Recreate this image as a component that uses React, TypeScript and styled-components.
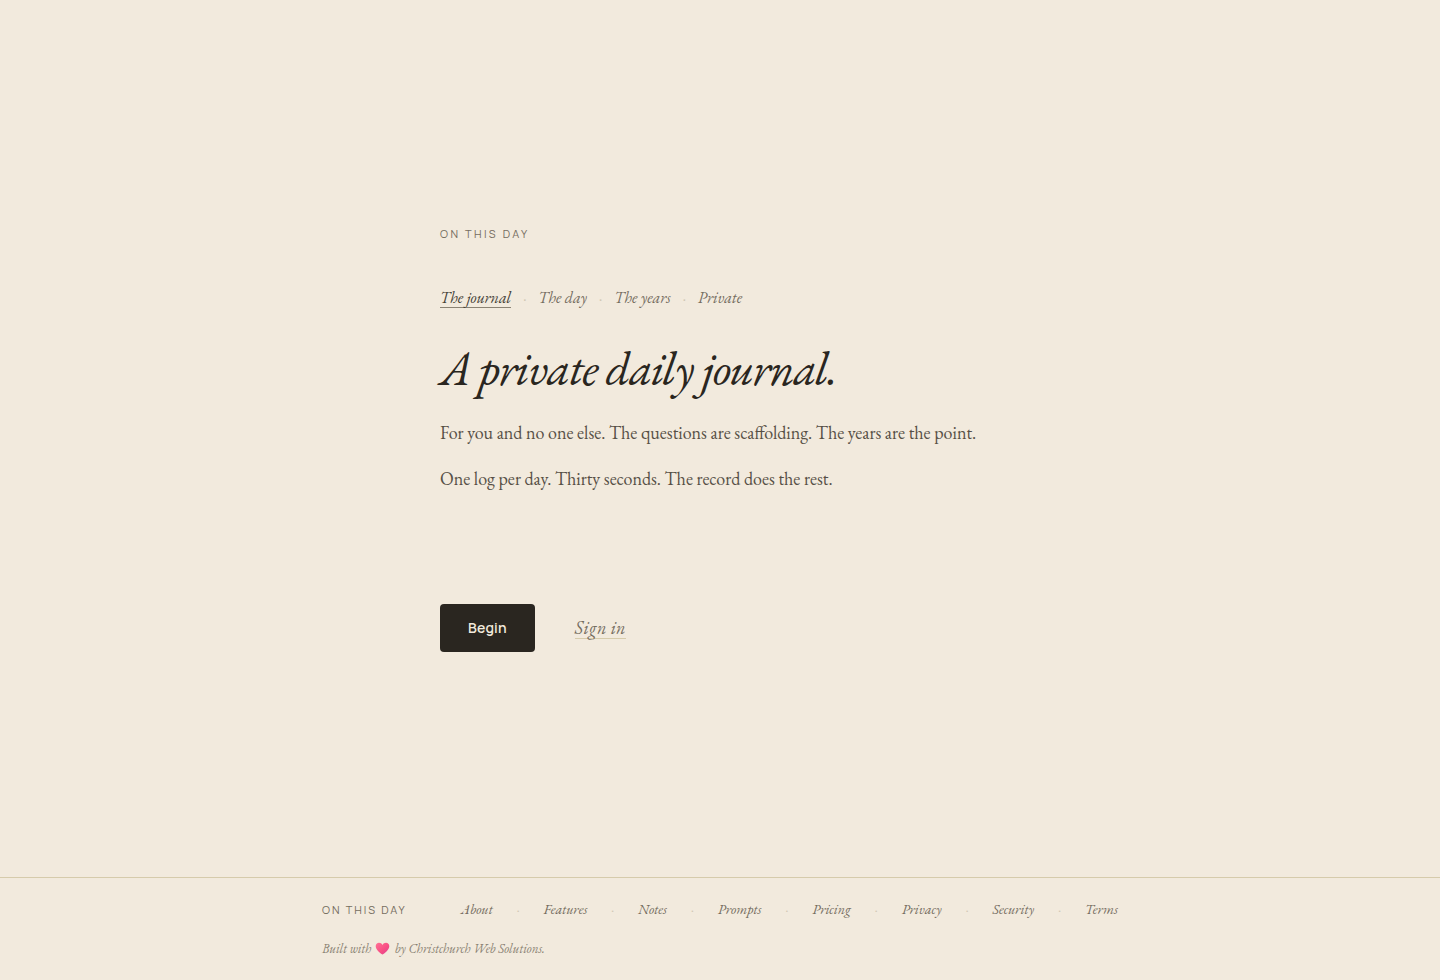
import React, { Fragment, useState } from "react";
import styled, { createGlobalStyle } from "styled-components";

const color = {
  paper: "#f2eadd",
  ink: "#2a2620",
  active: "#443e35",
  body: "#575046",
  muted: "#756d5f",
  soft: "#8a8273",
  dot: "#d0c7b4",
  rule: "#d6cbab",
};

const serif = `"EB Garamond", "Liberation Serif", serif`;
const sans = `Manrope, Inter, "Liberation Sans", sans-serif`;

const GlobalStyle = createGlobalStyle`
  *, *::before, *::after { box-sizing: border-box; }
  body {
    margin: 0;
    background: ${color.paper};
    color: ${color.ink};
    font-family: ${serif};
    -webkit-font-smoothing: antialiased;
  }
`;

const Page = styled.div`
  display: flex;
  flex-direction: column;
  min-height: 100vh;
`;

const Main = styled.main`
  flex: 1;
  display: flex;
  align-items: center;
  justify-content: center;
  padding: 48px 24px;
`;

const Column = styled.div`
  width: 100%;
  max-width: 560px;
`;

const Wordmark = styled.p<{ $compact?: boolean }>`
  margin: 0;
  font-family: ${sans};
  font-size: 11px;
  line-height: 18px;
  letter-spacing: ${(p) => (p.$compact ? "0.18em" : "0.22em")};
  text-transform: uppercase;
  white-space: nowrap;
  color: ${color.muted};
`;

const Tabs = styled.nav`
  display: flex;
  flex-wrap: wrap;
  align-items: center;
  gap: 12px;
  margin-top: 46px;
`;

const Tab = styled.button<{ $active: boolean }>`
  padding: 0;
  border: 0;
  border-bottom: 1px solid ${(p) => (p.$active ? color.soft : "transparent")};
  background: none;
  font: italic 16px/18px ${serif};
  color: ${(p) => (p.$active ? color.active : color.muted)};
  cursor: pointer;
`;

const Dot = styled.span<{ $small?: boolean }>`
  font-size: ${(p) => (p.$small ? "14px" : "16px")};
  line-height: 16px;
  color: ${color.dot};
`;

const Title = styled.h1`
  margin: 32px 0 0;
  font-size: 48px;
  font-style: italic;
  font-weight: 400;
  line-height: 56px;
  letter-spacing: -0.025em;
`;

const Copy = styled.div`
  display: grid;
  gap: 16px;
  min-height: 140px;
  align-content: start;
  margin-top: 22px;
`;

const Paragraph = styled.p`
  margin: 0;
  font-size: 18px;
  line-height: 30px;
  color: ${color.body};
`;

const Actions = styled.div`
  display: flex;
  align-items: center;
  gap: 40px;
  margin-top: 46px;
`;

const BeginButton = styled.button`
  height: 48px;
  padding: 0 28px;
  border: 0;
  border-radius: 4px;
  background: ${color.ink};
  color: ${color.paper};
  font: 600 14px/20px ${sans};
  letter-spacing: 0.01em;
  cursor: pointer;
`;

const SignIn = styled.a`
  border-bottom: 1px solid ${color.rule};
  font-size: 18px;
  font-style: italic;
  line-height: 20px;
  letter-spacing: 0.02em;
  color: ${color.muted};
  text-decoration: none;
`;

const Footer = styled.footer`
  padding: 21px 24px;
  border-top: 1px solid ${color.rule};
`;

const FooterInner = styled.div`
  width: 100%;
  max-width: 796px;
  margin: 0 auto;
`;

const FooterRow = styled.div`
  display: flex;
  align-items: baseline;
  flex-wrap: wrap;
  gap: 12px 54px;
`;

const FooterLinks = styled.nav`
  flex: 1;
  display: flex;
  flex-wrap: wrap;
  align-items: center;
  justify-content: space-between;
`;

const FooterLink = styled.a`
  font-size: 14px;
  font-style: italic;
  line-height: 20px;
  color: ${color.muted};
  text-decoration: none;
`;

const Credit = styled.p`
  margin: 20px 0 0;
  font-size: 13px;
  font-style: italic;
  line-height: 20px;
  color: ${color.soft};
`;

const HeartIcon = styled.svg`
  margin: 0 2px 0 1px;
  vertical-align: -2px;
`;

const tabs = [
  {
    name: "The journal",
    title: "A private daily journal.",
    copy: [
      "For you and no one else. The questions are scaffolding. The years are the point.",
      "One log per day. Thirty seconds. The record does the rest.",
    ],
  },
  { name: "The day" },
  { name: "The years" },
  { name: "Private" },
];

const links = ["About", "Features", "Notes", "Prompts", "Pricing", "Privacy", "Security", "Terms"];

const Heart = () => (
  <HeartIcon width="15" height="13" viewBox="0 0 15 13" role="img" aria-label="love">
    <defs>
      <linearGradient id="heart" x1="0" y1="0" x2="1" y2="1">
        <stop offset="0" stopColor="#ff7295" />
        <stop offset="0.55" stopColor="#f84f84" />
        <stop offset="1" stopColor="#dc3f91" />
      </linearGradient>
    </defs>
    <path
      d="M7.5 12.6C5.2 11.2.7 7.9.7 4.3.7 2.1 2.2.8 4 .8c1.5 0 2.8.8 3.5 2.1C8.2 1.6 9.5.8 11 .8c1.8 0 3.3 1.3 3.3 3.5 0 3.6-4.5 6.9-6.8 8.3Z"
      fill="url(#heart)"
    />
  </HeartIcon>
);

export default function App() {
  const [active, setActive] = useState(0);
  return (
    <>
      <GlobalStyle />
      <Page>
        <Main>
          <Column>
            <Wordmark>On this day</Wordmark>
            <Tabs aria-label="Introduction">
              {tabs.map((tab, i) => (
                <Fragment key={tab.name}>
                  {i > 0 && <Dot aria-hidden="true">·</Dot>}
                  <Tab type="button" $active={i === active} onClick={() => setActive(i)}>
                    {tab.name}
                  </Tab>
                </Fragment>
              ))}
            </Tabs>
            <Title>{tabs[active].title ?? tabs[active].name}</Title>
            <Copy>
              {tabs[active].copy?.map((text) => (
                <Paragraph key={text}>{text}</Paragraph>
              ))}
            </Copy>
            <Actions>
              <BeginButton type="button">Begin</BeginButton>
              <SignIn href="#sign-in">Sign in</SignIn>
            </Actions>
          </Column>
        </Main>
        <Footer>
          <FooterInner>
            <FooterRow>
              <Wordmark $compact>On this day</Wordmark>
              <FooterLinks aria-label="Footer">
                {links.map((name, i) => (
                  <Fragment key={name}>
                    {i > 0 && <Dot $small aria-hidden="true">·</Dot>}
                    <FooterLink href={`#${name.toLowerCase()}`}>{name}</FooterLink>
                  </Fragment>
                ))}
              </FooterLinks>
            </FooterRow>
            <Credit>
              Built with <Heart /> by Christchurch Web Solutions.
            </Credit>
          </FooterInner>
        </Footer>
      </Page>
    </>
  );
}
